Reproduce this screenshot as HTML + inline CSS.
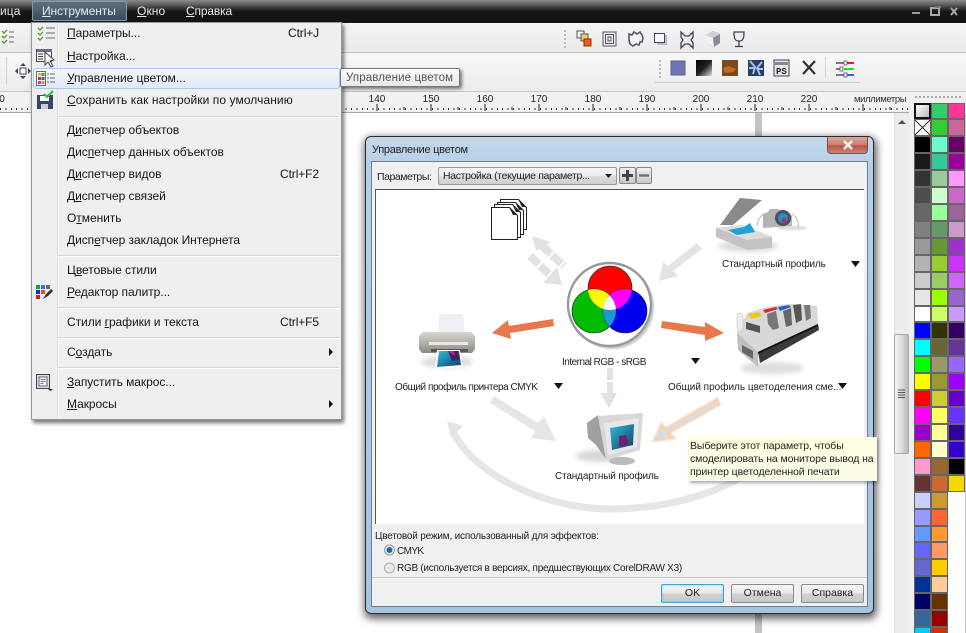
<!DOCTYPE html>
<html><head><meta charset="utf-8"><style>
html,body{margin:0;padding:0;width:966px;height:633px;overflow:hidden;background:#fff;font-family:"Liberation Sans",sans-serif;color:#111}
#w{position:relative;width:966px;height:633px;overflow:hidden;background:#fff}
.a{position:absolute;white-space:nowrap}
.m{position:absolute;left:67px;font-size:12px;line-height:14px;white-space:nowrap;letter-spacing:-.05px;color:#151515}
.s{position:absolute;font-size:12px;line-height:14px;color:#151515;letter-spacing:-.1px}
.sep{position:absolute;left:57px;width:282px;height:1px;background:#d8d8d8;border-bottom:1px solid #fff}
.t{position:absolute;font-size:10px;line-height:12px;color:#222;transform:translateX(-50%)}
.l{position:absolute;font-size:10px;line-height:12px;white-space:nowrap;color:#222}
.b{position:absolute;top:584px;height:17px;line-height:17px;text-align:center;font-size:10.5px;border:1px solid #8a8a8a;border-radius:2px;background:linear-gradient(#f6f6f6 0,#e8e8e8 48%,#d2d2d2 52%,#c8c8c8 100%);color:#222}
.pal div{box-sizing:border-box;border:1px solid #666}
</style></head><body><div id="w">

<!-- title + menu bar -->
<div class="a" style="left:0;top:0;width:966px;height:23px;background:linear-gradient(#8c8c8c 0,#5a5a5a 5px,#222 10px,#141414 12px,#141414 100%)"></div>
<div class="a" style="left:32px;top:1px;width:93px;height:18px;border:1px solid #7f9ab2;border-radius:2px;background:linear-gradient(#5c7080,#3c4e5e)"></div>
<div class="a" style="left:0;top:4px;font-size:12px;line-height:14px;color:#e8e8e8;letter-spacing:.1px">ица</div>
<div class="a" style="left:42px;top:4px;font-size:12px;line-height:14px;color:#e8e8e8;letter-spacing:-.1px"><u>И</u>нструменты</div>
<div class="a" style="left:137px;top:4px;font-size:12px;line-height:14px;color:#e8e8e8;letter-spacing:.1px"><u>О</u>кно</div>
<div class="a" style="left:186px;top:4px;font-size:12px;line-height:14px;color:#e8e8e8;letter-spacing:-.15px"><u>С</u>правка</div>
<svg class="a" style="left:905px;top:3px" width="60" height="16"><rect x="7" y="9" width="8" height="2" fill="#999"/><rect x="26" y="5" width="8" height="7" fill="none" stroke="#aaa" stroke-width="2"/><rect x="30" y="3" width="6" height="2" fill="#777"/><path d="M46 5l6 7M52 5l-6 7" stroke="#aaa" stroke-width="2"/></svg>

<!-- toolbars -->
<div class="a" style="left:0;top:23px;width:966px;height:29px;background:linear-gradient(#f4f4f4,#ebebeb)"></div>
<div class="a" style="left:0;top:52px;width:966px;height:1px;background:#c4c4c4"></div>
<div class="a" style="left:0;top:53px;width:966px;height:38px;background:linear-gradient(#f8f8f8,#ececec)"></div>
<div class="a" style="left:0;top:91px;width:966px;height:1px;background:#c8c8c8"></div>
<div class="a" style="left:655px;top:82px;width:205px;height:1px;background:#cfcfcf"></div>
<div class="a" style="left:6px;top:57px;width:1px;height:27px;background:#d4d4d4"></div>

<svg class="a" style="left:0;top:23px" width="966" height="68">
 <g stroke="#667" stroke-width="1" fill="none"><path d="M9 9h5M9 14h5M9 19h5"/></g>
 <g fill="none" stroke="#5a9a30" stroke-width="1.4"><path d="M2 8l2 2 3-3M2 13l2 2 3-3M2 18l2 2 3-3"/></g>
 <g transform="translate(23,48)"><rect x="-3" y="-3" width="6" height="6" fill="#fff" stroke="#445" /><path d="M0-8l-3 3h6zM0 8l-3-3h6zM-8 0l3-3v6zM8 0l-3-3v6z" fill="#445"/></g>
 <g fill="#bbb"><rect x="564" y="7" width="2" height="2"/><rect x="564" y="11" width="2" height="2"/><rect x="564" y="15" width="2" height="2"/><rect x="564" y="19" width="2" height="2"/><rect x="564" y="23" width="2" height="2"/>
 <rect x="659" y="37" width="2" height="2"/><rect x="659" y="41" width="2" height="2"/><rect x="659" y="45" width="2" height="2"/><rect x="659" y="49" width="2" height="2"/><rect x="659" y="53" width="2" height="2"/></g>
 <rect x="577" y="8" width="7" height="7" fill="#f4f4f4" stroke="#555"/><rect x="581" y="11" width="7" height="7" fill="#fdc860" stroke="#555"/><rect x="584" y="16" width="7" height="7" fill="#f06000" stroke="#733"/>
 <rect x="603" y="9" width="13" height="14" fill="#eee" stroke="#556"/><rect x="605.5" y="11.5" width="8" height="9" fill="none" stroke="#556"/><rect x="608" y="14" width="3" height="4" fill="none" stroke="#556"/>
 <path d="M629 11l3 1 2-3 3 2 3-2 2 3 1 3-1 4-2 0-1 3-3-1-3 2-3-2-1-4z" fill="#f4f4f4" stroke="#556" stroke-width="1.6"/>
 <rect x="657" y="12" width="10" height="10" fill="#b8b8d0"/><rect x="654.500" y="10.500" width="10" height="9" fill="#f6f6f6" stroke="#445"/>
 <path d="M681 9l4 4h4l4-4v5l-2 3 2 3v5l-4-4h-4l-4 4v-5l2-3-2-3z" fill="#eee" stroke="#445" stroke-width="1.3"/>
 <path d="M706 12l7-4 7 3v9l-6 4-8-4z" fill="#8a8a9c"/><path d="M706 12l7 3 7-4-7-3z" fill="#d0d0d8"/><path d="M706 12l7 3 1 9-8-4z" fill="#f2f2f2"/>
 <path d="M734 9h10c0 7-1 9-5 9s-5-2-5-9zM739 18v5M735 23.500h8" fill="#eee" stroke="#445" stroke-width="1.3"/>
 <rect x="671" y="38" width="14" height="14" fill="#6f75b0" stroke="#5c6098"/>
 <defs><linearGradient id="gr" x1="0" y1="0" x2="1" y2="1"><stop offset="0" stop-color="#000"/><stop offset=".5" stop-color="#222"/><stop offset="1" stop-color="#ddd"/></linearGradient></defs>
 <rect x="696" y="37" width="16" height="16" fill="url(#gr)"/>
 <rect x="722" y="37" width="16" height="16" fill="#7a4a20"/><path d="M723 45l6-2 7 3-3 3-8 1z" fill="#c06a20"/>
 <rect x="748" y="37" width="16" height="16" fill="#2a3c6a"/><path d="M750 38l5 6-2 7M762 39l-5 6 3 7M749 45h6M757 46h6" stroke="#a8c0e8" stroke-width="2" fill="none"/>
 <rect x="774" y="37" width="15" height="16" fill="#e8e8e8" stroke="#445"/><path d="M775 39h13v3h-13z" fill="#889"/>
 <text x="776" y="51" font-family="Liberation Mono,monospace" font-size="9" font-weight="bold" fill="#222">PS</text>
 <path d="M803 38l12 13M815 38l-12 13" stroke="#333" stroke-width="2.2"/>
 <rect x="825" y="34" width="1" height="21" fill="#d6d6d6"/>
 <g fill="#778"><rect x="836" y="39" width="8" height="2"/><rect x="836" y="45" width="4" height="2"/><rect x="836" y="51" width="8" height="2"/></g>
 <g><rect x="844" y="38" width="3" height="4" fill="#fff" stroke="#556" stroke-width=".8"/><rect x="847" y="39" width="7" height="2" fill="#e02020"/><rect x="840" y="44" width="3" height="4" fill="#fff" stroke="#556" stroke-width=".8"/><rect x="844" y="45" width="10" height="2" fill="#20e020"/><rect x="844" y="50" width="3" height="4" fill="#fff" stroke="#556" stroke-width=".8"/><rect x="847" y="51" width="7" height="2" fill="#3060f0"/></g>
</svg>

<!-- ruler -->
<div class="a" style="left:0;top:92px;width:909px;height:20px;background:#f1f1f1"></div>
<div class="a" style="left:0;top:108px;width:909px;height:2px;background:repeating-linear-gradient(90deg,#333 0,#333 1px,transparent 1px,transparent 5.4px)"></div>
<div class="a" style="left:0;top:112px;width:909px;height:1px;background:#a8a8a8"></div>
<svg class="a" style="left:0;top:100px" width="909" height="12"><path d="M377 4v7M431 4v7M485 4v7M539 4v7M593 4v7M647 4v7M701 4v7M755 4v7M809 4v7M863 4v7M404 7v3M458 7v3M512 7v3M566 7v3M620 7v3M674 7v3M728 7v3M782 7v3M836 7v3M890 7v3" stroke="#222"/></svg>
<div class="t" style="left:2px;top:94px">0</div>
<div class="t" style="left:377px;top:94px">140</div><div class="t" style="left:431px;top:94px">150</div><div class="t" style="left:485px;top:94px">160</div><div class="t" style="left:539px;top:94px">170</div><div class="t" style="left:593px;top:94px">180</div><div class="t" style="left:647px;top:94px">190</div><div class="t" style="left:701px;top:94px">200</div><div class="t" style="left:755px;top:94px">210</div><div class="t" style="left:809px;top:94px">220</div>
<div class="a" style="left:854px;top:94px;font-size:9.500px;line-height:12px;color:#333;letter-spacing:-.4px">миллиметры</div>

<!-- page shadow line -->
<div class="a" style="left:755px;top:113px;width:7px;height:520px;background:#c4c4c4"></div>

<!-- scrollbar -->
<div class="a" style="left:894px;top:113px;width:15px;height:520px;background:#ededed;border-left:1px solid #e0e0e0;box-sizing:border-box"></div>
<svg class="a" style="left:896px;top:118px" width="12" height="8"><path d="M2 6l4-4 4 4z" fill="#555"/></svg>
<div class="a" style="left:894px;top:334px;width:15px;height:120px;box-sizing:border-box;border:1px solid #aaa;border-radius:2px;background:linear-gradient(90deg,#f4f4f4,#dcdcdc 50%,#b8b8b8)"></div>
<svg class="a" style="left:897px;top:389px" width="9" height="10"><path d="M1 1h7M1 3.500h7M1 6h7M1 8.500h7" stroke="#555"/></svg>

<!-- palette -->
<div class="a" style="left:909px;top:92px;width:57px;height:541px;background:#f0f0f0"></div>
<div class="a" style="left:964px;top:113px;width:2px;height:520px;background:#ccc"></div>
<div class="a" style="left:915px;top:96px;width:48px;height:2px;background:repeating-linear-gradient(90deg,#aaa 0,#aaa 2px,transparent 2px,transparent 4px)"></div>
<div class="a pal" style="left:913.5px;top:102.500px;width:51.300px;display:grid;grid-template-columns:17.100px 17.100px 17.100px;grid-auto-rows:16.930px;background:#fff">
<div style="background:linear-gradient(135deg,#fff,#bbb);border:2px solid #111"></div><div style="background:#33cc66"></div><div style="background:#ff3399"></div>
<div style="background:linear-gradient(45deg,transparent 47%,#333 47%,#333 53%,transparent 53%),linear-gradient(-45deg,transparent 47%,#333 47%,#333 53%,transparent 53%),#fff"></div><div style="background:#33cc33"></div><div style="background:#cc6699"></div>
<div style="background:#000"></div><div style="background:#66ffcc"></div><div style="background:#660066"></div>
<div style="background:#1a1a1a"></div><div style="background:#33cc99"></div><div style="background:#990099"></div>
<div style="background:#333"></div><div style="background:#99cc99"></div><div style="background:#ff99ff"></div>
<div style="background:#4d4d4d"></div><div style="background:#ccffcc"></div><div style="background:#cc66cc"></div>
<div style="background:#666"></div><div style="background:#99ff99"></div><div style="background:#996699"></div>
<div style="background:#808080"></div><div style="background:#669966"></div><div style="background:#cc99cc"></div>
<div style="background:#999"></div><div style="background:#669933"></div><div style="background:#9933cc"></div>
<div style="background:#b3b3b3"></div><div style="background:#99cc33"></div><div style="background:#cc33ff"></div>
<div style="background:#ccc"></div><div style="background:#99cc66"></div><div style="background:#cc66ff"></div>
<div style="background:#e6e6e6"></div><div style="background:#99ff00"></div><div style="background:#9966cc"></div>
<div style="background:#fff"></div><div style="background:#ccff66"></div><div style="background:#cc99ff"></div>
<div style="background:#00f"></div><div style="background:#333300"></div><div style="background:#330066"></div>
<div style="background:#0ff"></div><div style="background:#666633"></div><div style="background:#663399"></div>
<div style="background:#0f0"></div><div style="background:#999966"></div><div style="background:#9966ff"></div>
<div style="background:#ff0"></div><div style="background:#999933"></div><div style="background:#9900ff"></div>
<div style="background:#f00"></div><div style="background:#cccc33"></div><div style="background:#6600cc"></div>
<div style="background:#f0f"></div><div style="background:#ffff66"></div><div style="background:#6633ff"></div>
<div style="background:#9900cc"></div><div style="background:#ffff99"></div><div style="background:#330099"></div>
<div style="background:#ff6600"></div><div style="background:#ffffcc"></div><div style="background:#3300cc"></div>
<div style="background:#ff99cc"></div><div style="background:#996633"></div><div style="background:#000"></div>
<div style="background:#663333"></div><div style="background:#cc6633"></div><div style="background:#f5d800"></div>
<div style="background:#ccccff"></div><div style="background:#cc9933"></div><div style="border:0;background:#fff"></div>
<div style="background:#9999ff"></div><div style="background:#ff6633"></div><div style="border:0;background:#fff"></div>
<div style="background:#6699ff"></div><div style="background:#ff9933"></div><div style="border:0;background:#fff"></div>
<div style="background:#6666ff"></div><div style="background:#ff9966"></div><div style="border:0;background:#fff"></div>
<div style="background:#6666cc"></div><div style="background:#ffcc00"></div><div style="border:0;background:#fff"></div>
<div style="background:#003399"></div><div style="background:#ffcc99"></div><div style="border:0;background:#fff"></div>
<div style="background:#000066"></div><div style="background:#663300"></div><div style="border:0;background:#fff"></div>
<div style="background:#336699"></div><div style="background:#990000"></div><div style="border:0;background:#fff"></div>
<div style="background:#00ccff"></div><div style="background:#cc3300"></div><div style="border:0;background:#fff"></div>
</div>

<!-- menu -->
<div class="a" style="left:31px;top:22px;width:309px;height:396px;background:#efefef;border:1px solid #979797;box-shadow:2px 3px 4px rgba(0,0,0,.55)"></div>
<div class="a" style="left:57px;top:23px;width:1px;height:395px;background:#e0e0e0;border-right:1px solid #fafafa"></div>
<div class="a" style="left:33px;top:68px;width:305px;height:19px;border:1px solid #a8c8ec;border-radius:3px;background:linear-gradient(#f4f8fc,#dfeaf6)"></div>
<div class="sep" style="top:116px"></div><div class="sep" style="top:255px"></div><div class="sep" style="top:307px"></div><div class="sep" style="top:337px"></div><div class="sep" style="top:367px"></div>

<div class="m" style="top:26px"><u>П</u>араметры...</div><div class="s" style="left:288px;top:26px">Ctrl+J</div>
<div class="m" style="top:49px"><u>Н</u>астройка...</div>
<div class="m" style="top:71px"><u>У</u>правление цветом...</div>
<div class="m" style="top:93px;letter-spacing:.08px"><u>С</u>охранить как настройки по умолчанию</div>
<div class="m" style="top:123px">Д<u>и</u>спетчер объектов</div>
<div class="m" style="top:145px">Дис<u>п</u>етчер данных объектов</div>
<div class="m" style="top:167px">Д<u>и</u>спетчер видов</div><div class="s" style="left:280px;top:167px">Ctrl+F2</div>
<div class="m" style="top:189px">Д<u>и</u>спетчер связей</div>
<div class="m" style="top:211px">О<u>т</u>менить</div>
<div class="m" style="top:233px">Дисп<u>е</u>тчер закладок Интернета</div>
<div class="m" style="top:263px">Ц<u>в</u>етовые стили</div>
<div class="m" style="top:285px"><u>Р</u>едактор палитр...</div>
<div class="m" style="top:315px">Стили <u>г</u>рафики и текста</div><div class="s" style="left:280px;top:315px">Ctrl+F5</div>
<div class="m" style="top:345px">С<u>о</u>здать</div>
<div class="m" style="top:375px"><u>З</u>апустить макрос...</div>
<div class="m" style="top:397px"><u>М</u>акросы</div>

<svg class="a" style="left:31px;top:22px" width="40" height="396">
 <path d="M15 6h9M15 11h9M15 16h9" stroke="#667"/><path d="M7 6l2 2 3-3M7 11l2 2 3-3M7 16l2 2 3-3" stroke="#5a9a30" stroke-width="1.3" fill="none"/>
 <rect x="5.500" y="27.500" width="15" height="12" fill="#f2f2f2" stroke="#444a5a"/><rect x="6" y="27" width="15" height="3" fill="#6a7088"/><path d="M7 32h5M7 34.500h5M7 37h5" stroke="#444"/><path d="M14 30l0 13 3-3 3 5 2-1-3-5 4-1z" fill="#fff" stroke="#444"/>
 <rect x="5.500" y="49.500" width="9" height="14" fill="#fff" stroke="#667"/>
 <rect x="7" y="51" width="3" height="3" fill="#e0c020"/><rect x="10.500" y="51" width="3" height="3" fill="#40a030"/><rect x="7" y="55" width="3" height="3" fill="#d03030"/><rect x="10.500" y="55" width="3" height="3" fill="#3060d0"/><rect x="7" y="59" width="3" height="3" fill="#d030c0"/><rect x="10.500" y="59" width="3" height="3" fill="#f08020"/>
 <path d="M16 52h2M19 52h5M16 56h2M19 56h5M16 60h2M19 60h5" stroke="#667"/>
 <path d="M6 73h16v14H6z" fill="#384468"/><rect x="9" y="74" width="9" height="5" fill="#fff"/><rect x="10" y="82" width="7" height="5" fill="#c8ccd8"/><path d="M13 72l3 3 6-6" stroke="#30c040" stroke-width="2.200" fill="none"/>
 <g transform="translate(5,263)"><rect width="4" height="4" fill="#20a030"/><rect x="5" width="4" height="4" fill="#3070e0"/><rect x="10" width="4" height="4" fill="#667"/><rect y="5" width="4" height="4" fill="#1030d0"/><rect x="5" y="5" width="4" height="4" fill="#e05010"/><rect y="10" width="4" height="4" fill="#d02020"/><path d="M7 14l3-5 5-5 2 2-5 5z" fill="#333"/></g>
 <rect x="5.500" y="352.500" width="13" height="14" fill="#d8dce6" stroke="#445"/><rect x="8" y="355" width="8" height="9" fill="#f4f4f4" stroke="#667"/><path d="M9.500 357.500h5M9.500 359.500h5M9.500 361.500h3" stroke="#556" stroke-width=".8"/><path d="M17 367h5l-2.500 2z" fill="#222"/>
</svg>
<svg class="a" style="left:326px;top:346px" width="10" height="64"><path d="M3 2v8l4-4zM3 54v8l4-4z" fill="#111"/></svg>

<!-- menu tooltip -->
<div class="a" style="left:340px;top:68px;width:120px;height:19px;line-height:18px;box-sizing:border-box;padding-left:5px;border:1px solid #777;border-radius:2px;background:linear-gradient(#fcfcfc,#e8e8e8);font-size:11.500px;color:#555;letter-spacing:.12px;box-shadow:2px 2px 3px rgba(0,0,0,.5)">Управление цветом</div>

<!-- dialog -->
<div class="a" style="left:365px;top:136px;width:509px;height:478px;box-sizing:border-box;border:1px solid #2c2c2c;border-radius:6px;background:linear-gradient(#c3d8ea 0,#b4d0ea 30px,#a8c8e8 60%,#a6c4e2);box-shadow:1px 3px 8px 2px rgba(0,0,0,.6)"></div>
<div class="a" style="left:827px;top:137px;width:41px;height:17px;box-sizing:border-box;border:1px solid #8a4a4a;border-top:0;border-radius:0 0 4px 4px;background:linear-gradient(#dca89e,#c87a70 50%,#b85448 55%,#c4857a)"></div>
<svg class="a" style="left:841px;top:139px" width="14" height="12"><path d="M3 2l8 8M11 2l-8 8" stroke="#f4f4f4" stroke-width="2.600"/></svg>
<div class="a" style="left:372px;top:143px;font-size:11px;line-height:14px;color:#222;letter-spacing:-.28px">Управление цветом</div>
<div class="a" style="left:371px;top:161px;width:497px;height:446px;box-sizing:border-box;border:1px solid #6f7f8f;background:#f0f0f0"></div>

<div class="a" style="left:377px;top:171px;font-size:10.500px;line-height:12px;color:#222;letter-spacing:-.45px">Параметры:</div>
<div class="a" style="left:438px;top:167px;width:179px;height:18px;box-sizing:border-box;border:1px solid #999;border-radius:2px;background:linear-gradient(#f8f8f8,#ececec 48%,#dcdcdc 52%,#cfcfcf);font-size:10.500px;line-height:16px;padding-left:4px;color:#222;letter-spacing:-.35px">Настройка (текущие параметр...</div>
<svg class="a" style="left:604px;top:173px" width="10" height="6"><path d="M1 1h7l-3.500 4z" fill="#222"/></svg>
<div class="a" style="left:619px;top:167px;width:17px;height:17px;box-sizing:border-box;border:1px solid #888;border-radius:2px;background:linear-gradient(#f0f0f0,#c8c8c8)"></div>
<div class="a" style="left:636px;top:167px;width:16px;height:17px;box-sizing:border-box;border:1px solid #888;border-radius:2px;background:linear-gradient(#f0f0f0,#c8c8c8)"></div>
<svg class="a" style="left:619px;top:167px" width="33" height="17"><path d="M3 8.500h11M8.500 3v11" stroke="#3a4658" stroke-width="3"/><path d="M20 8.500h10" stroke="#66707c" stroke-width="2.400"/></svg>

<!-- picture -->
<div class="a" style="left:375px;top:189px;width:489px;height:335px;box-sizing:border-box;background:#fff;border-top:1px solid #555;border-left:1px solid #555"></div>
<svg class="a" style="left:0;top:0" width="966" height="633">
 <defs>
  <clipPath id="cr"><circle cx="610" cy="288" r="22"/></clipPath>
  <clipPath id="cg"><circle cx="594" cy="311" r="22"/></clipPath>
  <clipPath id="cb"><circle cx="625" cy="311" r="22"/></clipPath>
  <filter id="bl" x="-30%" y="-60%" width="160%" height="220%"><feGaussianBlur stdDeviation="2.500"/></filter>
  <filter id="b1" x="-30%" y="-30%" width="160%" height="160%"><feGaussianBlur stdDeviation=".8"/></filter>
  <linearGradient id="gs" x1="0" y1="0" x2="0" y2="1"><stop offset="0" stop-color="#d8d8d0"/><stop offset="1" stop-color="#8a8a82"/></linearGradient>
  <linearGradient id="sc" x1="0" y1="0" x2="1" y2="1"><stop offset="0" stop-color="#30c0d8"/><stop offset="1" stop-color="#103a70"/></linearGradient>
 </defs>

 <!-- docs -->
 <g fill="#fff" stroke="#222" stroke-width="1">
  <path d="M500.500 199.500h18l8 8v22h-26z"/><path d="M497.500 202.500h18l8 8v24h-26z"/><path d="M494.500 204.500h18l8 8v25h-26z"/><path d="M491.500 207.500h18l8 8v24h-26z"/>
 </g>
 <path d="M518 199l8 8-4 0zM515 202l8 8-4 0zM512 204l8 8-4 0zM509 207l8 8-4 0z" fill="#222"/>

 <!-- grey arrows -->
 <g fill="#e2e2e2">
  <path d="M532 236l19 6-15 9z"/><path d="M542 246L564 266" stroke="#e2e2e2" stroke-width="8" stroke-dasharray="12 2" fill="none"/>
  <path d="M562 285l-19-2 14-16z"/><path d="M530 256L551 276" stroke="#e2e2e2" stroke-width="8" stroke-dasharray="12 2" fill="none"/>
  <path d="M697 243l5 6-29 22 5 5-19 5 4-19 5 4z" fill="#e4e4e4"/>
  <path d="M607 368h6v12h-6zM607 382h6v12h-6zM600 393h17l-8 15z"/>
  <path d="M490 403l4-7 44 27 6-7 12 25-25-3 4-7z" fill="#e6e6e6"/>
 </g>
 <path d="M718 397l-52 30-5-5-9 20 25-3-6-6 50-28z" fill="#f8c8a0" filter="url(#b1)" opacity=".8"/>
 <path d="M717 401l-53 30-4-4-6 13 17-2-5-4 52-29z" fill="#dcdcdc"/>
 <!-- curve -->
 <path d="M453 432C475 475 545 509 610 509C665 509 730 495 778 450" fill="none" stroke="#e6e6e6" stroke-width="7"/>
 <path d="M447 421l16 5-12 12z" fill="#e4e4e4"/>
 <path d="M778 436l-12 8 8 7z" fill="#eaeaea"/>

 <!-- rgb circle -->
 <circle cx="612" cy="307" r="42" fill="#bbb" filter="url(#b1)" opacity=".8"/>
 <circle cx="609.500" cy="304.500" r="41.500" fill="#fff" stroke="#999" stroke-width="2.400"/>
 <circle cx="610" cy="288" r="22" fill="#f00" stroke="#222" stroke-width=".6"/>
 <circle cx="594" cy="311" r="22" fill="#0b0" stroke="#222" stroke-width=".6"/>
 <circle cx="625" cy="311" r="22" fill="#00e" stroke="#222" stroke-width=".6"/>
 <g clip-path="url(#cr)"><circle cx="594" cy="311" r="22" fill="#ff0"/><circle cx="625" cy="311" r="22" fill="#f0f"/></g>
 <g clip-path="url(#cg)"><circle cx="625" cy="311" r="22" fill="#1a9ad6"/><g clip-path="url(#cr)"><circle cx="625" cy="311" r="22" fill="#fff"/></g></g>

 <!-- orange arrows -->
 <path d="M553 319l-44 7-1-6-16 13 19 6-1-6 44-7z" fill="#e8784a"/>
 <path d="M662 321l43 6 0-5 19 11-19 8 0-6-44-7z" fill="#e8784a"/>

 <!-- printer -->
 <ellipse cx="447" cy="362" rx="26" ry="6" fill="#ddd" filter="url(#bl)"/>
 <path d="M439 314h24l2 20h-27z" fill="#eef0f4"/>
 <path d="M419 336l4-4h48l4 4v13l-3 4h-50l-3-4z" fill="url(#gs)"/>
 <rect x="429" y="342" width="39" height="3" fill="#e8e8e2"/>
 <rect x="431" y="349" width="37" height="3" fill="#555"/>
 <path d="M437 350h23l3 17-28 2z" fill="#fff"/>
 <path d="M439 351h20l2 14-24 2z" fill="url(#sc)"/><path d="M448 351h10l2 9-8 1z" fill="#402060"/><path d="M448 351h6l1 5z" fill="#d02080"/>

 <!-- scanner + camera -->
 <ellipse cx="748" cy="246" rx="30" ry="6" fill="#ddd" filter="url(#bl)"/>
 <path d="M720 225l20-27 22 2-29 25z" fill="#8a8a8a"/>
 <path d="M716 228l27-3 29 12v11l-25 2-31-13z" fill="#c4c4c4"/>
 <path d="M716 228l27-3 29 12-25 3z" fill="#dcdcdc"/>
 <path d="M728 230l16-3 6-4 5 9-18 3z" fill="#20a0d8"/>
 <ellipse cx="792" cy="228" rx="15" ry="2.500" fill="#e0e0e0" filter="url(#b1)"/>
 <path d="M763 214l5-2 2-3 8 0 2 1 8 2 4 4v10l-29 2z" fill="#b4b4b4"/>
 <circle cx="783" cy="218" r="8" fill="#4c5060"/><circle cx="783" cy="218" r="5" fill="#2090d0"/><circle cx="784" cy="220" r="2.400" fill="#b03050"/>
 <path d="M763 214c-5 5-6 9-6 12M792 214c5 3 7 8 6 14" stroke="#bbb" fill="none"/>

 <!-- press -->
 <ellipse cx="772" cy="368" rx="32" ry="6" fill="#ddd" filter="url(#bl)"/>
 <path d="M747 313l16-5 15-3 12-1 27 2 1 19-60 27-21-19z" fill="#d8d8d8"/>
 <path d="M737 333l21 19v15l-20-17z" fill="#c0c0c0"/>
 <path d="M742 345l11 6v8l-11-7z" fill="#666"/>
 <path d="M758 352l60-28 1 6-59 33z" fill="#3a3a3a"/>
 <path d="M758 352l60-28v2l-60 28z" fill="#111"/>
 <path d="M746 322l14 4v7l-14-4z" fill="#555"/>
 <path d="M748 314l11-2 3 4-11 3z" fill="#e8c820"/>
 <path d="M763 310l13-3 2 2-13 4z" fill="#e02030"/>
 <path d="M767 314l9-3 3 17-6 2-5-6z" fill="#777"/>
 <path d="M778 307l11-2 2 2-11 4z" fill="#2060d0"/>
 <path d="M783 311l8-3 1 17-6 2z" fill="#666"/>
 <path d="M793 305l8-1 1 16-6 3z" fill="#555"/><path d="M804 305l6 0 1 13-5 3z" fill="#777"/>
 <path d="M737 314l3-1 3 2v15l-4 2-2-4z" fill="#ececec" stroke="#bbb" stroke-width=".5"/>

 <!-- monitor -->
 <ellipse cx="598" cy="456" rx="22" ry="6" fill="#d8d8d8" filter="url(#bl)"/>
 <path d="M587 423l11-8 8 44-10-14-8-7z" fill="#a0a0a0"/>
 <ellipse cx="622" cy="461" rx="13" ry="4" fill="#bbb"/>
 <path d="M598 416l45-3-3 37-34 10z" fill="#d8d8d8"/>
 <path d="M604 423l35-5-2 29-29 8z" fill="#e8e8e8"/>
 <path d="M610 428l24-4-1 21-21 5z" fill="url(#sc)"/><path d="M619 436l7-1 3 9-10 3z" fill="#702070"/>
</svg>

<!-- labels -->
<div class="l" style="left:722px;top:259px;letter-spacing:-.15px">Стандартный профиль</div>
<div class="l" style="left:562px;top:357px;letter-spacing:-.5px">Internal RGB - sRGB</div>
<div class="l" style="left:395px;top:382px;letter-spacing:-.45px">Общий профиль принтера CMYK</div>
<div class="l" style="left:668px;top:382px">Общий профиль цветоделения сме...</div>
<div class="l" style="left:555px;top:471px;letter-spacing:-.15px">Стандартный профиль</div>
<svg class="a" style="left:0;top:0" width="966" height="633"><path d="M851 261h9l-4.500 6zM691 358h9l-4.500 6zM554 383h9l-4.500 6zM838 383h9l-4.500 6z" fill="#111"/></svg>

<!-- balloon tooltip -->
<div class="a" style="left:689px;top:437px;width:188px;height:44px;box-sizing:border-box;padding:3px 0 0 1px;background:linear-gradient(#ffffdf,#fbfbe8);box-shadow:1px 2px 3px rgba(0,0,0,.35);font-size:10.500px;line-height:13px;color:#222;letter-spacing:-.1px">Выберите этот параметр, чтобы<br>смоделировать на мониторе вывод на<br>принтер цветоделенной печати</div>

<!-- bottom of dialog -->
<div class="l" style="left:375px;top:531px;letter-spacing:-.19px">Цветовой режим, использованный для эффектов:</div>
<svg class="a" style="left:383px;top:543px" width="14" height="32"><circle cx="6.500" cy="7" r="5" fill="#eee" stroke="#999"/><circle cx="6.500" cy="7" r="3" fill="#1a6ea8"/><circle cx="6.500" cy="25" r="5" fill="#e8e8e8" stroke="#aaa"/></svg>
<div class="l" style="left:397px;top:546px;letter-spacing:-.6px">CMYK</div>
<div class="l" style="left:397px;top:563px;letter-spacing:-.27px">RGB (используется в версиях, предшествующих CorelDRAW X3)</div>
<div class="a" style="left:372px;top:577px;width:495px;height:1px;background:#c8c8c8;border-bottom:1px solid #fff"></div>
<div class="b" style="left:661px;width:61px;border:1px solid #3ca4d0;box-shadow:inset 0 0 2px #70c8ec">OK</div>
<div class="b" style="left:731px;width:61px">Отмена</div>
<div class="b" style="left:801px;width:61px">Справка</div>
</div></body></html>
